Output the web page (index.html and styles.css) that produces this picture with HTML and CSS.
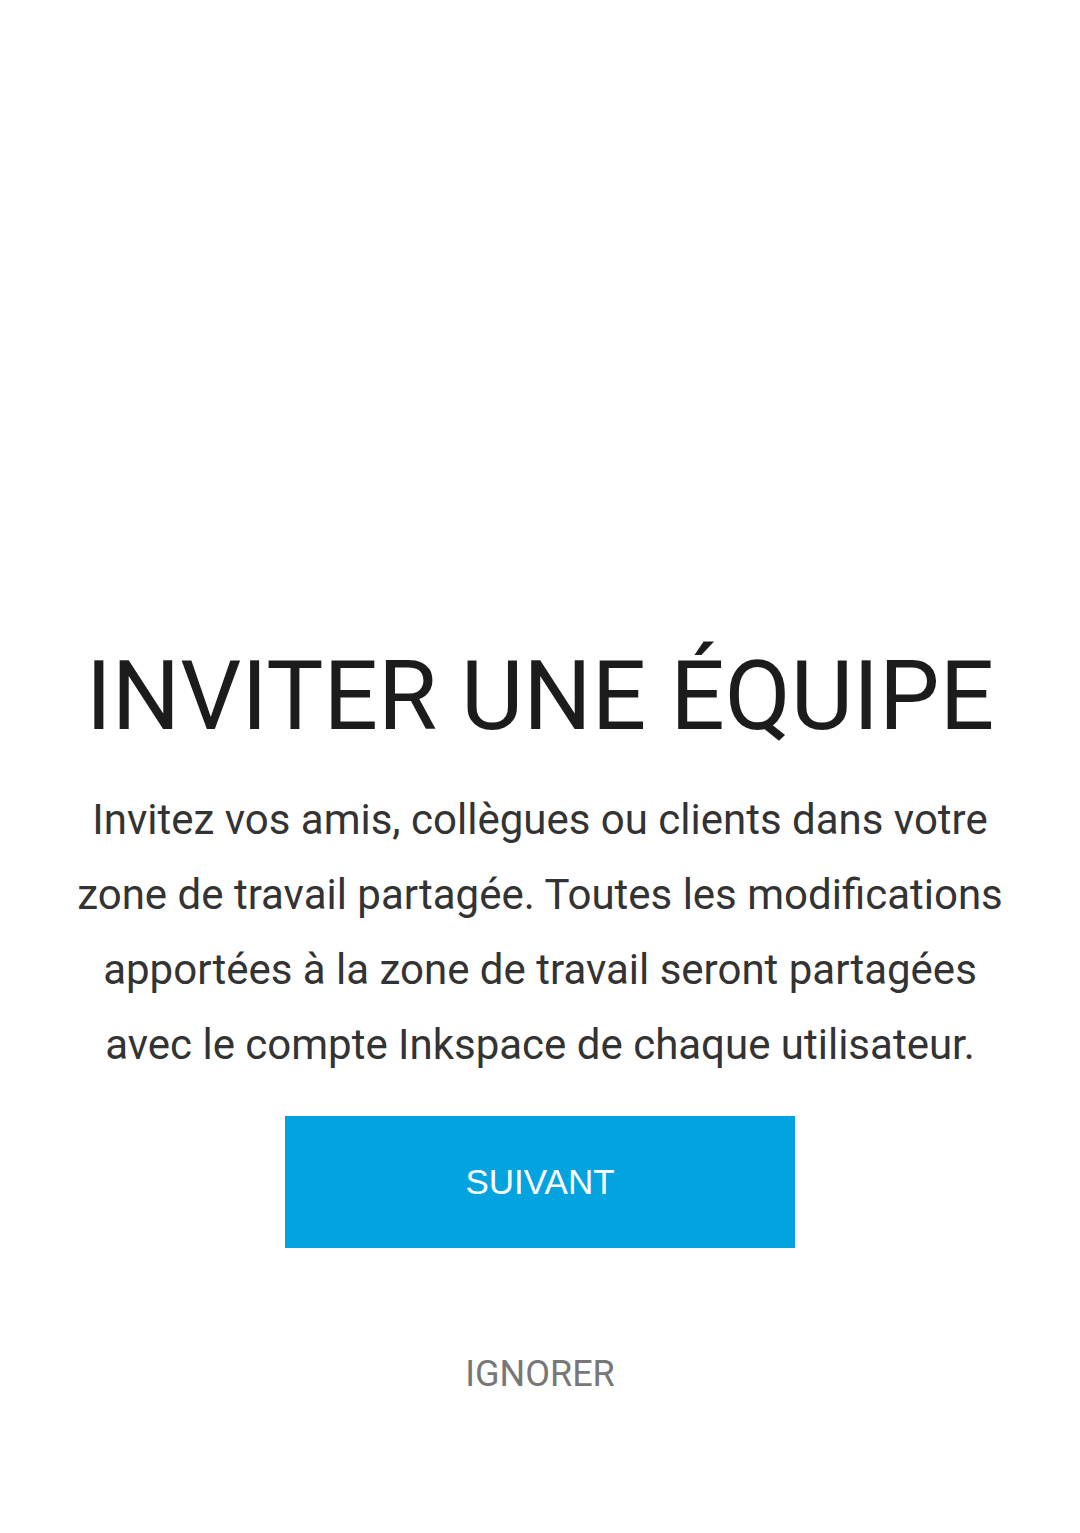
FILE: index.html
```html
<!DOCTYPE html>
<html lang="fr">
<head>
<meta charset="utf-8">
<title>Inviter une équipe</title>
<link rel="stylesheet" href="styles.css">
</head>
<body>
<main class="screen">
  <h1 class="title">INVITER UNE ÉQUIPE</h1>
  <p class="desc">Invitez vos amis, collègues ou clients dans votre<br>zone de travail partagée. Toutes les modifications<br>apportées à la zone de travail seront partagées<br>avec le compte Inkspace de chaque utilisateur.</p>
  <button class="btn-next">SUIVANT</button>
  <button class="btn-skip">IGNORER</button>
</main>
</body>
</html>
```
FILE: styles.css
```css
html, body {
  margin: 0;
  padding: 0;
  background: #ffffff;
}
.screen {
  width: 1080px;
  height: 1533px;
  box-sizing: border-box;
  padding-top: 636px;
  display: flex;
  flex-direction: column;
  align-items: center;
  font-family: Roboto, "Liberation Sans", sans-serif;
}
.title {
  margin: 0;
  font-size: 96px;
  line-height: 120px;
  font-weight: 400;
  color: #1c1c1c;
  text-align: center;
  white-space: nowrap;
}
.desc {
  margin: 26px 0 0;
  font-size: 42px;
  line-height: 75px;
  color: #333333;
  text-align: center;
  white-space: nowrap;
}
.btn-next {
  margin-top: 34px;
  width: 510px;
  height: 132px;
  border: 0;
  background: #03a3e0;
  color: #ffffff;
  font-family: "Liberation Sans", Arial, sans-serif;
  font-size: 35px;
  line-height: 132px;
  padding: 0 0 2px;
  box-sizing: border-box;
}
.btn-skip {
  margin-top: 101px;
  border: 0;
  background: transparent;
  padding: 0;
  font-family: Roboto, sans-serif;
  font-size: 36px;
  line-height: 50px;
  color: #777777;
}
```
